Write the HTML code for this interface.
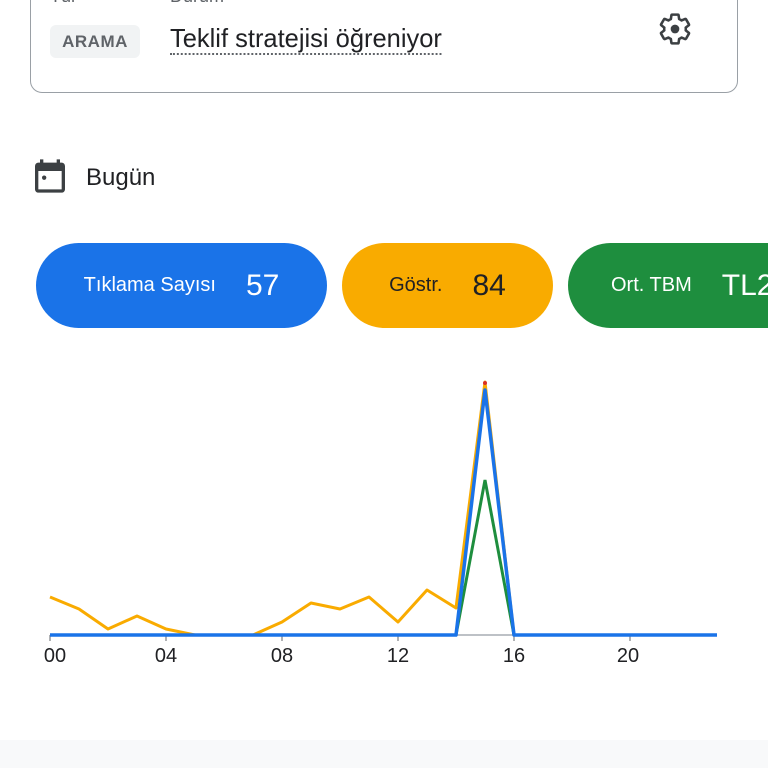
<!DOCTYPE html>
<html><head><meta charset="utf-8"><style>
body{margin:0;width:768px;height:768px;background:#fff;position:relative;overflow:hidden;font-family:"Liberation Sans",sans-serif;color:#202124}
.a{position:absolute}
.card{left:30px;top:-20px;width:706px;height:111px;border:1.5px solid #9aa0a6;border-radius:12px}
.pill{position:absolute;top:243px;height:85px;border-radius:43px;display:flex;align-items:center;justify-content:center;white-space:nowrap}
.pill .l{font-size:20px}.pill .n{font-size:30px;margin-left:30px}
</style></head><body>
<div class="a card"></div>
<div class="a" style="left:50px;top:-14px;font-size:18px;color:#5f6368">Tür</div>
<div class="a" style="left:170px;top:-14px;font-size:18px;color:#5f6368">Durum</div>
<div class="a" style="left:50px;top:25px;width:90px;height:33px;background:#f1f3f4;border-radius:6px;font-size:17px;font-weight:bold;color:#5f6368;display:flex;align-items:center;justify-content:center;letter-spacing:0.5px">ARAMA</div>
<div class="a" style="left:170px;top:24px;font-size:26px;border-bottom:2px dotted #5f6368;line-height:29px;transform:scaleX(0.98);transform-origin:left">Teklif stratejisi öğreniyor</div>
<svg class="a" style="left:655px;top:9px" width="40" height="40" viewBox="0 0 24 24"><path fill="none" stroke="#3c4043" stroke-width="1.7" stroke-linejoin="round" transform="translate(12 12) scale(0.9) translate(-12 -12)" d="M19.14 12.94c.04-.3.06-.61.06-.94s-.02-.64-.07-.94l2.03-1.58a.49.49 0 0 0 .12-.61l-1.92-3.32a.49.49 0 0 0-.59-.22l-2.39.96c-.5-.38-1.03-.7-1.62-.94l-.36-2.54a.48.48 0 0 0-.48-.41h-3.84c-.24 0-.43.17-.47.41l-.36 2.54c-.59.24-1.13.57-1.62.94l-2.39-.96a.48.48 0 0 0-.59.22L2.740 8.87c-.12.21-.08.47.12.61l2.03 1.58c-.05.3-.09.63-.09.94s.02.64.07.94l-2.03 1.58a.49.49 0 0 0-.12.61l1.92 3.32c.12.22.37.29.59.22l2.39-.96c.5.38 1.03.7 1.62.94l.36 2.54c.05.24.24.41.48.41h3.84c.24 0 .44-.17.47-.41l.36-2.54c.59-.24 1.13-.56 1.62-.94l2.39.96c.22.08.47 0 .59-.22l1.92-3.32c.12-.22.07-.47-.12-.61l-2.010-1.58z"/><circle cx="12" cy="12" r="2.6" fill="#3c4043"/></svg>
<svg class="a" style="left:30px;top:156px" width="40" height="40" viewBox="0 0 24 24"><path fill="#3c4043" d="M19 4h-1V2h-2v2H8V2H6v2H5a2 2 0 0 0-2 2v14a2 2 0 0 0 2 2h14a2 2 0 0 0 2-2V6a2 2 0 0 0-2-2zm0 16H5V9h14v11z"/><circle cx="8.5" cy="13" r="1.3" fill="#3c4043"/></svg>
<div class="a" style="left:86px;top:164px;font-size:24px">Bugün</div>
<div class="pill" style="left:36px;width:291px;background:#1a73e8;color:#fff"><span class="l">Tıklama Sayısı</span><span class="n">57</span></div>
<div class="pill" style="left:342px;width:211px;background:#f9ab00;color:#202124"><span class="l">Göstr.</span><span class="n">84</span></div>
<div class="pill" style="left:568px;width:300px;background:#1e8e3e;color:#fff;justify-content:flex-start;padding-left:43px;box-sizing:border-box"><span class="l">Ort. TBM</span><span class="n">TL2</span></div>
<svg class="a" style="left:0;top:0" width="768" height="768">
<line x1="50" y1="635" x2="717" y2="635" stroke="#bdc1c6" stroke-width="2"/>
<g stroke="#5f6368" stroke-width="1"><line x1="50" y1="635" x2="50" y2="641"/><line x1="166" y1="635" x2="166" y2="641"/><line x1="282" y1="635" x2="282" y2="641"/><line x1="398" y1="635" x2="398" y2="641"/><line x1="514" y1="635" x2="514" y2="641"/><line x1="630" y1="635" x2="630" y2="641"/></g>
<polyline fill="none" stroke="#f9ab00" stroke-width="3" stroke-linejoin="round" points="50,597 79,609 108,629 137,616 166,629 195,635 224,635 253,635 282,622 311,603 340,609 369,597 398,622 427,590 456,608 485,382 514,635"/>
<circle cx="485" cy="383" r="2" fill="#d93025"/>
<polyline fill="none" stroke="#1e8e3e" stroke-width="3" points="456,635 485,480 514,635"/>
<polyline fill="none" stroke="#1a73e8" stroke-width="3.5" stroke-linejoin="round" points="50,635 456,635 485,390 514,635 717,635"/>
<g font-size="20" fill="#202124" font-family="Liberation Sans" text-anchor="middle"><text x="55" y="662">00</text><text x="166" y="662">04</text><text x="282" y="662">08</text><text x="398" y="662">12</text><text x="514" y="662">16</text><text x="628" y="662">20</text></g>
</svg>
<div class="a" style="left:0;top:740px;width:768px;height:28px;background:#f8f9fa"></div>
</body></html>
